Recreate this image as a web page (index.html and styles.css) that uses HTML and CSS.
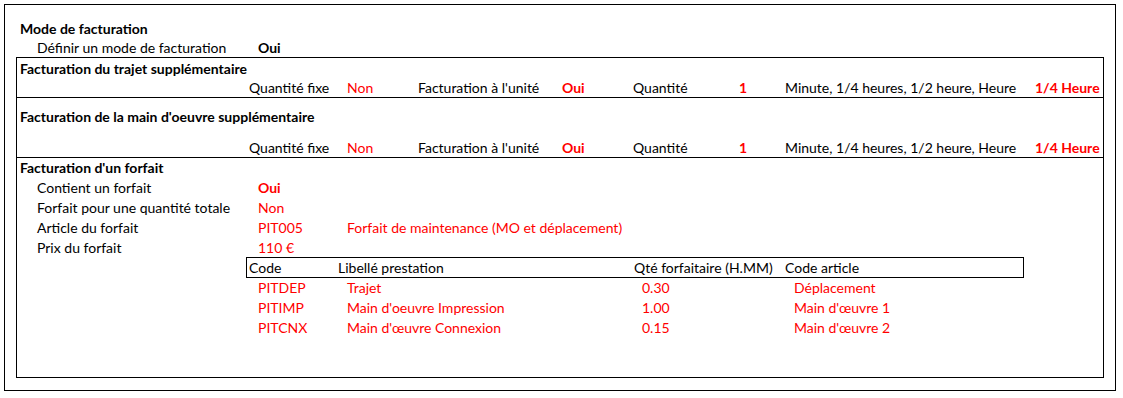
FILE: index.html
```html
<!DOCTYPE html>
<html lang="fr">
<head>
<meta charset="utf-8">
<title>Mode de facturation</title>
<link rel="stylesheet" href="styles.css">
</head>
<body>
<div class="sheet">
  <div class="title">Mode de facturation</div>
  <div class="def-row">
    <span>Définir un mode de facturation</span>
    <span class="b">Oui</span>
  </div>
  <div class="box">
    <section class="sec s1">
      <div class="head">Facturation du trajet supplémentaire</div>
      <div class="vals">
        <span>Quantité fixe</span>
        <span class="red">Non</span>
        <span>Facturation à l'unité</span>
        <span class="red b">Oui</span>
        <span>Quantité</span>
        <span class="red b">1</span>
        <span>Minute, 1/4 heures, 1/2 heure, Heure</span>
        <span class="red b">1/4 Heure</span>
      </div>
    </section>
    <section class="sec s2">
      <div class="head">Facturation de la main d'oeuvre supplémentaire</div>
      <div class="vals">
        <span>Quantité fixe</span>
        <span class="red">Non</span>
        <span>Facturation à l'unité</span>
        <span class="red b">Oui</span>
        <span>Quantité</span>
        <span class="red b">1</span>
        <span>Minute, 1/4 heures, 1/2 heure, Heure</span>
        <span class="red b">1/4 Heure</span>
      </div>
    </section>
    <section class="sec s3">
      <div class="head">Facturation d'un forfait</div>
      <div class="param"><span>Contient un forfait</span><span class="red b">Oui</span></div>
      <div class="param"><span>Forfait pour une quantité totale</span><span class="red">Non</span></div>
      <div class="param"><span>Article du forfait</span><span class="red">PIT005</span><span class="red">Forfait de maintenance (MO et déplacement)</span></div>
      <div class="param short"><span>Prix du forfait</span><span class="red">110 €</span></div>
      <div class="thead">
        <span>Code</span>
        <span>Libellé prestation</span>
        <span>Qté forfaitaire (H.MM)</span>
        <span>Code article</span>
      </div>
      <div class="trow red"><span>PITDEP</span><span>Trajet</span><span>0.30</span><span>Déplacement</span></div>
      <div class="trow red"><span>PITIMP</span><span>Main d'oeuvre Impression</span><span>1.00</span><span>Main d'œuvre 1</span></div>
      <div class="trow red"><span>PITCNX</span><span>Main d'œuvre Connexion</span><span>0.15</span><span>Main d'œuvre 2</span></div>
    </section>
  </div>
</div>
</body>
</html>
```

FILE: styles.css
```css
html, body {
  margin: 0;
  padding: 0;
  background: #ffffff;
}

body {
  font-family: "Lato", "Open Sans", sans-serif;
  font-size: 14px;
  color: #000000;
}

.sheet {
  box-sizing: border-box;
  margin: 4px 0 0 4px;
  width: 1112px;
  height: 387px;
  border: 1px solid #000;
  padding-top: 14px;
}

.b { font-weight: 700; }
.red { color: #ff0000; }

.title {
  height: 20px;
  line-height: 20px;
  padding-left: 15px;
  font-weight: 700;
}

.def-row {
  display: grid;
  grid-template-columns: 221px auto;
  height: 18px;
  line-height: 18px;
  padding-left: 32px;
}

.box {
  box-sizing: border-box;
  margin-left: 11px;
  width: 1088px;
  height: 321px;
  border: 1px solid #000;
}

.sec { box-sizing: border-box; }

.s1, .s2 { border-bottom: 1px solid #000; }

.s1 { padding-top: 1px; }
.s2 { padding-top: 9px; }

.head {
  height: 20px;
  line-height: 20px;
  padding-left: 3px;
  font-weight: 700;
}

.vals {
  display: grid;
  grid-template-columns: 98px 71px 144px 71px 106px 46px 250px auto;
  padding-left: 232px;
  white-space: nowrap;
}

.s1 .vals { height: 18px; line-height: 18px; }
.s2 .vals { height: 19px; line-height: 19px; margin-top: 11px; }

.param {
  display: grid;
  grid-template-columns: 221px 89px auto;
  height: 20px;
  line-height: 20px;
  padding-left: 20px;
  white-space: nowrap;
}

.param.short { height: 19px; line-height: 19px; }

.thead {
  box-sizing: border-box;
  display: grid;
  grid-template-columns: 89px 296px 151px auto;
  margin-left: 229px;
  width: 778px;
  height: 21px;
  line-height: 19px;
  border: 1px solid #000;
  padding-left: 2px;
  white-space: nowrap;
}

.trow {
  display: grid;
  grid-template-columns: 89px 295px 152px auto;
  height: 20px;
  line-height: 20px;
  padding-left: 241px;
  white-space: nowrap;
}
```
